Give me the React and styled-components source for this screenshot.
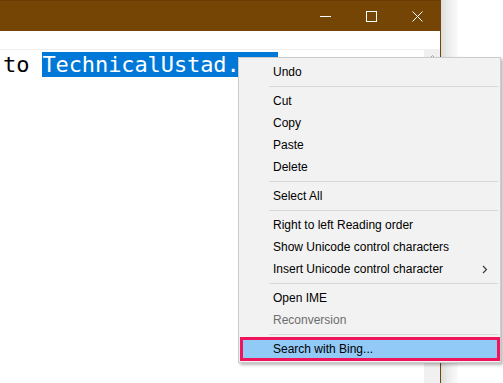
import React from "react";
import styled, { createGlobalStyle } from "styled-components";

const GlobalStyle = createGlobalStyle`
  html, body {
    margin: 0;
    padding: 0;
    background: #fff;
    overflow: hidden;
  }
`;

const Page = styled.div`
  position: relative;
  display: flex;
  width: 503px;
  height: 383px;
  background: #fff;
`;

const Window = styled.div`
  display: flex;
  flex-direction: column;
  width: 440px;
  height: 100%;
  border-right: 1px solid #744504;
`;

const Shadow = styled.div`
  width: 17px;
  height: 100%;
  background: linear-gradient(to right, #dcdcdc, #ececec 40%, #fbfbfb);
`;

const TitleBar = styled.div`
  display: flex;
  justify-content: flex-end;
  height: 31px;
  background: #744504;
  border-top: 1px solid #6a3e03;
  box-sizing: border-box;
`;

const TitleButton = styled.div`
  display: flex;
  align-items: center;
  justify-content: center;
  width: 46px;
  height: 30px;
`;

const MenuBar = styled.div`
  height: 18px;
  background: #fff;
  border-bottom: 1px solid #f0f0f0;
`;

const Editor = styled.div`
  display: flex;
  flex: 1;
`;

const TextArea = styled.div`
  flex: 1;
  padding: 1px 0 0 3px;
  font-family: "DejaVu Sans Mono", "Liberation Mono", monospace;
  font-size: 22px;
  line-height: 28px;
  letter-spacing: -0.1px;
  color: #000;
  white-space: pre;
  overflow: hidden;
`;

const Selected = styled.span`
  background: #0078d7;
  color: #fff;
  padding-right: ${(p) => p.extend || 0}px;
`;

const ScrollBar = styled.div`
  display: flex;
  justify-content: center;
  width: 16px;
  background: #f0f0f0;
  padding-top: 5px;
  box-sizing: border-box;
`;

const Menu = styled.div`
  position: absolute;
  left: 238px;
  top: 57px;
  width: 263px;
  height: 306px;
  box-sizing: border-box;
  background: #f2f2f2;
  border: 1px solid #cccccc;
  box-shadow: 2px 2px 3px rgba(0, 0, 0, 0.28);
  padding: 3px 0 2px 0;
  font-family: "Liberation Sans", Arial, sans-serif;
  font-size: 12px;
  color: #000;
`;

const Item = styled.div`
  display: flex;
  align-items: center;
  justify-content: space-between;
  height: ${(p) => (p.highlight ? "24px" : "22px")};
  padding: 0 12px 0 ${(p) => (p.highlight ? "33px" : "34px")};
  margin: ${(p) => (p.highlight ? "-1px 0 0 1px" : "0")};
  color: ${(p) => (p.disabled ? "#6d6d6d" : "#000")};
  background: ${(p) => (p.highlight ? "#91c9f7" : "transparent")};
  box-shadow: ${(p) => (p.highlight ? "inset 0 0 0 3px #f0155a" : "none")};
`;

const Separator = styled.div`
  height: 7px;
  display: flex;
  align-items: center;
  padding-left: 30px;
  padding-right: 2px;
  &::after {
    content: "";
    flex: 1;
    height: 1px;
    background: #d7d7d7;
  }
`;

const Chevron = () => (
  <svg width="6" height="9" viewBox="0 0 6 9">
    <path d="M1 1l3.5 3.5L1 8" fill="none" stroke="#333" strokeWidth="1.1" />
  </svg>
);

const items = [
  { label: "Undo" },
  { sep: true },
  { label: "Cut" },
  { label: "Copy" },
  { label: "Paste" },
  { label: "Delete" },
  { sep: true },
  { label: "Select All" },
  { sep: true },
  { label: "Right to left Reading order" },
  { label: "Show Unicode control characters" },
  { label: "Insert Unicode control character", sub: true },
  { sep: true },
  { label: "Open IME" },
  { label: "Reconversion", disabled: true },
  { sep: true },
  { label: "Search with Bing...", highlight: true },
];

export default function App() {
  return (
    <Page>
      <GlobalStyle />
      <Window>
        <TitleBar>
          <TitleButton>
            <svg width="11" height="11" viewBox="0 0 11 11">
              <path d="M0 5.5h11" stroke="#fff" strokeWidth="1" />
            </svg>
          </TitleButton>
          <TitleButton>
            <svg width="11" height="11" viewBox="0 0 11 11">
              <rect x="0.5" y="0.5" width="10" height="10" fill="none" stroke="#fff" />
            </svg>
          </TitleButton>
          <TitleButton>
            <svg width="11" height="11" viewBox="0 0 11 11">
              <path d="M0.5 0.5l10 10M10.5 0.5l-10 10" stroke="#fff" strokeWidth="1" />
            </svg>
          </TitleButton>
        </TitleBar>
        <MenuBar />
        <Editor>
          <TextArea>
            {"to "}
            <Selected extend={38}>TechnicalUstad.</Selected>
          </TextArea>
          <ScrollBar>
            <svg width="7" height="4" viewBox="0 0 7 4">
              <path d="M0.5 3.5l3-3 3 3" fill="none" stroke="#a3a3a3" />
            </svg>
          </ScrollBar>
        </Editor>
      </Window>
      <Shadow />
      <Menu>
        {items.map((it, i) =>
          it.sep ? (
            <Separator key={i} />
          ) : (
            <Item key={i} disabled={it.disabled} highlight={it.highlight}>
              <span>{it.label}</span>
              {it.sub && <Chevron />}
            </Item>
          )
        )}
      </Menu>
    </Page>
  );
}
